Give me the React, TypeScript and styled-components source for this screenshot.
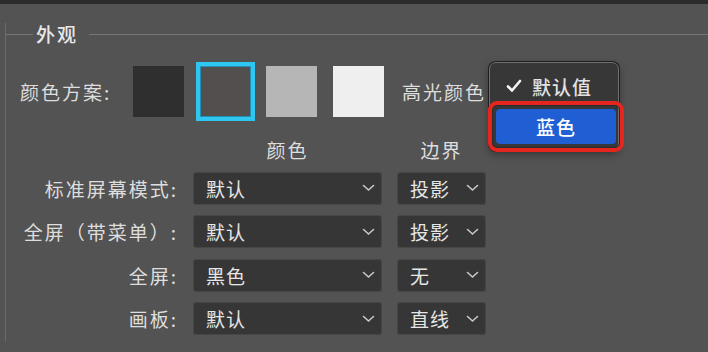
import React from 'react';
import styled, { createGlobalStyle } from 'styled-components';

const GlobalStyle = createGlobalStyle`
    html, body {
        margin: 0;
        padding: 0;
        background: #535353;
        overflow: hidden;
    }
    body {
        font-family: "Noto Sans CJK SC", "Noto Sans", sans-serif;
        color: #dedede;
    }
`;

const TopEdge = styled.div`
    height: 4px;
    background: #2c2c2c;
`;

const Section = styled.section`
    margin: 30px 0 0 5px;
    height: 318px;
    box-sizing: border-box;
    border-left: 1px solid #6c6c6c;
`;

const SectionHeader = styled.div`
    display: flex;
    align-items: center;
    height: 22px;
    margin-top: -11px;
`;

const HeaderLine = styled.div<{ $width?: number }>`
    height: 1px;
    background: #767676;
    flex: ${(p) => (p.$width ? `0 0 ${p.$width}px` : '1')};
`;

const Title = styled.span`
    padding: 0 11px 0 3px;
    font-size: 19px;
    line-height: 22px;
    font-weight: 500;
    letter-spacing: 2px;
    color: #e8e8e8;
`;

const SchemeRow = styled.div`
    display: flex;
    align-items: center;
    height: 51px;
    margin-top: 21px;
    padding-left: 14px;
`;

const Label = styled.span`
    font-size: 19px;
    letter-spacing: 2px;
    white-space: nowrap;
`;

const SchemeLabel = styled(Label)`
    width: 113px;
`;

const Swatches = styled.div`
    display: flex;
    gap: 15.7px;
`;

const Swatch = styled.div<{ $color: string; $selected?: boolean }>`
    width: 51px;
    height: 51px;
    background: ${(p) => p.$color};
    outline: ${(p) => (p.$selected ? '4px solid #2fc6f2' : 'none')};
    box-shadow: ${(p) => (p.$selected ? 'inset 0 0 0 1px #2590b5' : 'none')};
`;

const HighlightGroup = styled.div`
    position: relative;
    display: flex;
    align-items: center;
    margin-left: 18px;
    height: 100%;
`;

const Popup = styled.div`
    position: absolute;
    left: 87px;
    top: -4px;
    width: 130px;
    padding: 3px 2px 6px 6px;
    box-sizing: border-box;
    background: #373737;
    border: 1px solid #6f6f6f;
    border-radius: 7px;
    box-shadow: 0 0 0 1px #1e1e1e, 0 3px 8px rgba(0, 0, 0, 0.4);
`;

const MenuItem = styled.div`
    display: flex;
    align-items: center;
    height: 40px;
    padding-left: 10px;
    font-size: 19px;
    letter-spacing: 1px;
    font-weight: 500;
    color: #e2e2e2;
`;

const CheckMark = styled.svg`
    margin-right: 10px;
`;

const ActiveItem = styled.div`
    position: relative;
    height: 35px;
    margin-top: 3px;
    border-radius: 4px;
    background: #1f5fd3;
    display: flex;
    align-items: center;
    justify-content: center;
    font-size: 19px;
    font-weight: 500;
    letter-spacing: 1px;
    color: #ffffff;
`;

const Marker = styled.div`
    position: absolute;
    inset: -8px;
    border: 4px solid #e4261f;
    border-radius: 9px;
    box-shadow: inset 0 0 0 1px #2a2a2a;
`;

const Table = styled.div`
    display: grid;
    grid-template-columns: 172px 189px 89px;
    grid-template-rows: 23px repeat(4, 33px);
    column-gap: 15px;
    row-gap: 10.6px;
    margin-top: 21px;
`;

const ColumnHead = styled.span`
    font-size: 19px;
    letter-spacing: 2px;
    text-align: center;
    line-height: 23px;
`;

const RowLabel = styled(Label)`
    align-self: center;
    text-align: right;
`;

const Select = styled.div`
    display: flex;
    align-items: center;
    justify-content: space-between;
    padding: 0 6px 0 12px;
    background: #363636;
    border: 1px solid #464646;
    border-radius: 3px;
    font-size: 19px;
    letter-spacing: 1px;
    color: #e6e6e6;
`;

const Chevron = () => (
    <svg width="13" height="8" viewBox="0 0 13 8">
        <path d="M1.5 1.5 L6.5 6 L11.5 1.5" fill="none" stroke="#c8c8c8" strokeWidth="1.6" strokeLinecap="round" />
    </svg>
);

const rows = [
    { label: '标准屏幕模式:', color: '默认', border: '投影' },
    { label: '全屏（带菜单）:', color: '默认', border: '投影' },
    { label: '全屏:', color: '黑色', border: '无' },
    { label: '画板:', color: '默认', border: '直线' },
];

const App = (): JSX.Element => {
    return (
        <>
            <GlobalStyle />
            <TopEdge />
            <Section>
                <SectionHeader>
                    <HeaderLine $width={27} />
                    <Title>外观</Title>
                    <HeaderLine />
                </SectionHeader>
                <SchemeRow>
                    <SchemeLabel>颜色方案:</SchemeLabel>
                    <Swatches>
                        <Swatch $color="#2f2f2f" />
                        <Swatch $color="#534f4f" $selected />
                        <Swatch $color="#b6b6b6" />
                        <Swatch $color="#efefef" />
                    </Swatches>
                    <HighlightGroup>
                        <Label>高光颜色</Label>
                        <Popup>
                            <MenuItem>
                                <CheckMark width="16" height="14" viewBox="0 0 16 14">
                                    <path d="M2 7.5 L6 11.5 L14 2" fill="none" stroke="#f4f4f4" strokeWidth="2.6" strokeLinecap="round" strokeLinejoin="round" />
                                </CheckMark>
                                默认值
                            </MenuItem>
                            <ActiveItem>
                                蓝色
                                <Marker />
                            </ActiveItem>
                        </Popup>
                    </HighlightGroup>
                </SchemeRow>
                <Table>
                    <span />
                    <ColumnHead>颜色</ColumnHead>
                    <ColumnHead>边界</ColumnHead>
                    {rows.map((row) => (
                        <React.Fragment key={row.label}>
                            <RowLabel>{row.label}</RowLabel>
                            <Select>
                                {row.color}
                                <Chevron />
                            </Select>
                            <Select>
                                {row.border}
                                <Chevron />
                            </Select>
                        </React.Fragment>
                    ))}
                </Table>
            </Section>
        </>
    );
};

export default App;
